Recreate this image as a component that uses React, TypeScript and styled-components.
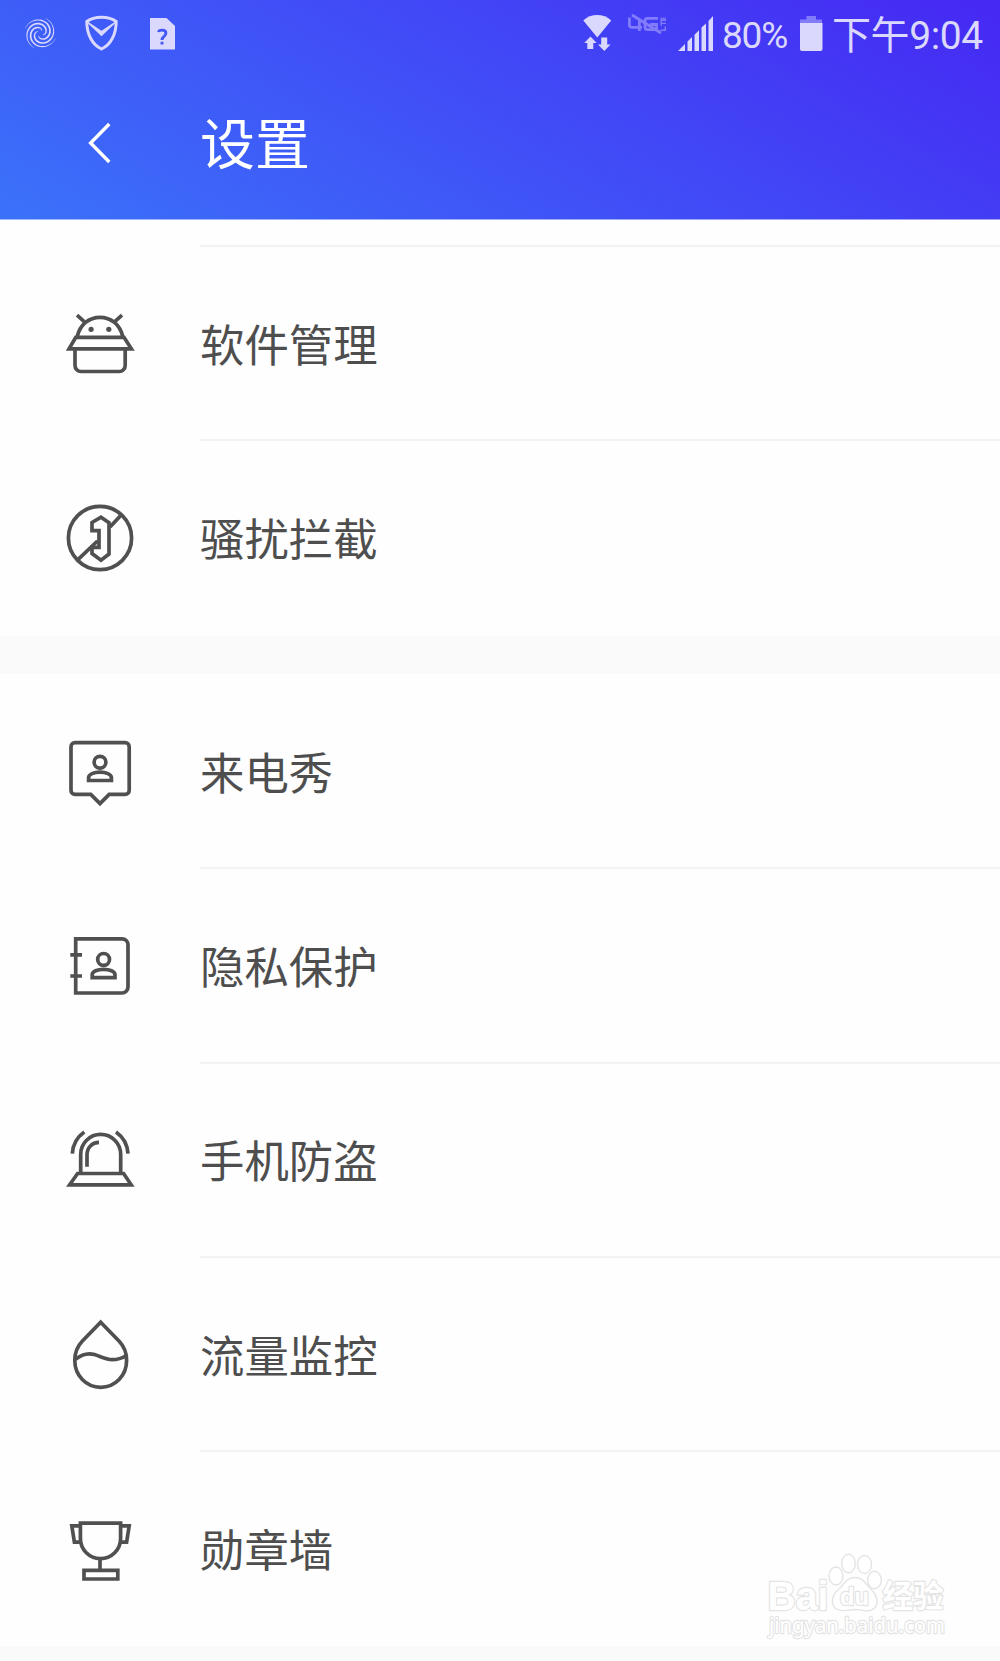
import React from "react";
import styled, { createGlobalStyle } from "styled-components";

const GlobalStyle = createGlobalStyle`
  * { box-sizing: border-box; }
  body { margin: 0; background: #ffffff; }
`;

const Screen = styled.div`
  position: relative;
  width: 1000px;
  height: 1661px;
  overflow: hidden;
  background: #fefefe;
  font-family: Roboto, "Noto Sans CJK SC", sans-serif;
`;

const Header = styled.header`
  height: 219px;
  background: linear-gradient(30deg, #3b72fa 0%, #4628f3 100%);
`;

const HeaderEdge = styled.div`
  height: 1px;
  background: linear-gradient(90deg, #9dbafd, #a29ffa);
`;

const StatusBar = styled.div`
  height: 68px;
  display: flex;
  align-items: flex-start;
  color: #dad8fd;
`;

const StatusIcon = styled.svg<{ $left: number; $top: number }>`
  display: block;
  flex: none;
  margin-left: ${(p) => p.$left}px;
  margin-top: ${(p) => p.$top}px;
`;

const StatusText = styled.span<{ $left: number; $top: number; $size: number; $width: number; $spacing: number }>`
  flex: none;
  width: ${(p) => p.$width}px;
  margin-left: ${(p) => p.$left}px;
  margin-top: ${(p) => p.$top}px;
  font-size: ${(p) => p.$size}px;
  letter-spacing: ${(p) => p.$spacing}px;
  line-height: 44px;
  white-space: nowrap;
`;

const Spacer = styled.span`
  flex: 1;
`;

const TitleBar = styled.div`
  height: 150px;
  display: flex;
  align-items: center;
`;

const BackButton = styled.button`
  width: 200px;
  height: 100%;
  padding: 0;
  border: 0;
  background: none;
  display: flex;
  align-items: center;
  justify-content: center;
`;

const Title = styled.h1`
  margin: 0;
  padding-bottom: 6px;
  color: #ffffff;
  font-family: "Noto Sans CJK SC", sans-serif;
  font-size: 55px;
  font-weight: 400;
  line-height: 80px;
`;

const Section = styled.section<{ $top?: number; $bottom?: number }>`
  padding-top: ${(p) => p.$top ?? 0}px;
  padding-bottom: ${(p) => p.$bottom ?? 0}px;
  background: #fefefe;
`;

const Band = styled.div<{ $height: number }>`
  height: ${(p) => p.$height}px;
  background: #fafafa;
`;

const Row = styled.div<{ $height: number }>`
  height: ${(p) => p.$height}px;
  display: flex;
`;

const IconCell = styled.div`
  width: 200px;
  padding: 2px 0 0 64px;
  display: flex;
  align-items: center;
`;

const RowIcon = styled.svg`
  display: block;
  fill: none;
  stroke: #505050;
  stroke-width: 3.7;
`;

const LabelCell = styled.div<{ $divider: boolean }>`
  flex: 1;
  display: flex;
  align-items: center;
  padding-bottom: 0.6px;
  border-top: 2px solid ${(p) => (p.$divider ? "#f3f3f3" : "transparent")};
`;

const Label = styled.span`
  color: #4e4e4e;
  font-family: "Noto Sans CJK SC", sans-serif;
  font-size: 44.4px;
  line-height: 64px;
`;

const Watermark = styled.svg`
  position: absolute;
  right: 0;
  bottom: 0;
  fill: #ffffff;
  stroke: #e4e4e4;
  stroke-width: 1.4;

  text {
    paint-order: stroke;
    stroke-width: 2.4;
    stroke-linejoin: round;
  }
`;

const Person = ({ x, y }: { x: number; y: number }) => (
  <g transform={`translate(${x} ${y})`}>
    <circle r="5.9" />
    <path d="M-11.4 18.2V15.4C-11.4 12 -6 9.9 0 9.9S11.4 12 11.4 15.4V18.2Z" />
  </g>
);

const icons = {
  software: (
    <>
      <path d="M13 8.2L20.5 14.8M58 8.2L50.5 14.8" />
      <path d="M13.3 29.5C16 17.5 25 10.3 36 10.3S56 17.5 58.7 29.5" />
      <path d="M11.8 30.3H60L67.4 41.8H5Z" />
      <path d="M11 42V58.5A6 6 0 0 0 17 64.5H55.2A6 6 0 0 0 61.2 58.5V42" />
      <circle cx="27.1" cy="22.3" r="2.6" fill="#505050" stroke="none" />
      <circle cx="44.8" cy="22.3" r="2.6" fill="#505050" stroke="none" />
    </>
  ),
  block: (
    <>
      <circle cx="36" cy="36" r="31.6" />
      <path d="M13.4 58.2L33.5 39M57.2 13L46 25" />
      <path d="M37 15.2L45 20.8V52L37 58.2L28 51.6V45.4H35V28.7H28V20.5Z" />
    </>
  ),
  caller: (
    <>
      <path d="M11 7.7H61.2A4 4 0 0 1 65.2 11.7V55.4A4 4 0 0 1 61.2 59.4H45.2L36 68.6L26.8 59.4H11A4 4 0 0 1 7 55.4V11.7A4 4 0 0 1 11 7.7Z" />
      <Person x={36} y={27.3} />
    </>
  ),
  privacy: (
    <g transform="translate(0 1)">
      <path d="M11.7 8.8H58A6 6 0 0 1 64 14.8V57A6 6 0 0 1 58 63H11.7ZM6.3 24.8H18M6.3 46H18" />
      <Person x={39.6} y={29.4} />
    </g>
  ),
  alarm: (
    <>
      <path d="M13.6 49.5H59.6L67.2 60.8H5.6Z" />
      <path d="M16.7 49V30.4A20 20 0 0 1 56.7 30.4V49" />
      <path d="M23 42.7V31C23 23.5 28 18.5 35 18.4" />
      <path d="M8.3 29.7C8.8 20.5 13 13 20.3 7.9M64 29.7C63.5 20.5 59.2 13 52 7.9" />
    </>
  ),
  drop: (
    <g transform="translate(0 1)">
      <path d="M36.7 3.2L55.2 22.3C60 27.3 62.6 34 62.6 41.5C62.6 56.5 51.3 68.3 36.7 68.3S10.8 56.5 10.8 41.5C10.8 34 13.4 27.3 18.2 22.3Z" />
      <path d="M11.3 40.4C17 35.8 23.5 33.5 30.5 35.6C37 37.6 42 40.6 48 40.7C54 40.7 58.5 39 62.4 36.5" />
    </g>
  ),
  trophy: (
    <g transform="translate(0 1)">
      <path d="M16.4 9.2H56.6V24.5A20.1 20.1 0 0 1 16.4 24.5Z" />
      <path d="M16.4 11.8H7.8L10.4 28.2H16.8M56.6 11.8H65.2L62.6 28.2H56.2M36 44.7V56.4" />
      <path d="M20 56.4H53.8V65H20Z" />
    </g>
  ),
};

type ItemData = { icon: keyof typeof icons; label: string };

const Item = ({ icon, label, divider }: ItemData & { divider: boolean }) => (
  <Row $height={divider ? 194.4 : 193.4}>
    <IconCell>
      <RowIcon width="72" height="72" viewBox="0 0 72 72">
        {icons[icon]}
      </RowIcon>
    </IconCell>
    <LabelCell $divider={divider}>
      <Label>{label}</Label>
    </LabelCell>
  </Row>
);

const firstGroup: ItemData[] = [
  { icon: "software", label: "软件管理" },
  { icon: "block", label: "骚扰拦截" },
];

const secondGroup: ItemData[] = [
  { icon: "caller", label: "来电秀" },
  { icon: "privacy", label: "隐私保护" },
  { icon: "alarm", label: "手机防盗" },
  { icon: "drop", label: "流量监控" },
  { icon: "trophy", label: "勋章墙" },
];

// One arm of the swirl: a spiral band that is widest in its middle and tapers at both ends.
const spiralArm = (start: number) => {
  const outer: string[] = [];
  const inner: string[] = [];
  for (let i = 0; i <= 40; i++) {
    const t = i / 40;
    const angle = start - t * 5;
    const radius = 3 + 13 * Math.pow(t, 0.85);
    const half = 0.1 + 0.8 * Math.sin(Math.PI * Math.min(1, t * 0.85 + 0.15));
    const at = (r: number) => `${(16.3 + r * Math.cos(angle)).toFixed(2)} ${(16.3 + r * Math.sin(angle)).toFixed(2)}`;
    outer.push(at(radius + half));
    inner.unshift(at(radius - half));
  }
  return `M${outer.concat(inner).join("L")}Z`;
};

export default function App() {
  return (
    <Screen>
      <GlobalStyle />
      <Header>
        <StatusBar>
          <StatusIcon $left={24} $top={17} width="33" height="33" viewBox="0 0 33 33" fill="currentColor">
            {[0.6, 2.17, 3.74, 5.31].map((start) => (
              <path key={start} d={spiralArm(start)} />
            ))}
          </StatusIcon>
          <StatusIcon $left={27} $top={14} width="36" height="38" viewBox="0 0 36 38" fill="none" stroke="currentColor" strokeWidth="3">
            <path d="M17.5 3.2C23 3.2 28.5 4.7 32.2 7.5C32.2 20 27 30.5 17.5 35C8 30.5 2.8 20 2.8 7.5C6.5 4.7 12 3.2 17.5 3.2Z" />
            <path d="M4 8.5L17.5 17.6L31 8.5L17.5 21.5Z" fill="currentColor" strokeWidth="1.2" />
          </StatusIcon>
          <StatusIcon $left={30} $top={18} width="25" height="32" viewBox="0 0 25 32">
            <path d="M0 0H16.5L25 8V31.5H0Z" fill="currentColor" />
            <path d="M8.5 14C9 11.7 15.9 11 15.9 15.2C15.9 18.5 12 18.2 12 22M12 23.7V26.5" fill="none" stroke="#4459f7" strokeWidth="2.9" />
          </StatusIcon>
          <Spacer />
          <StatusIcon $left={0} $top={15} width="29" height="37" viewBox="0 0 29 37" fill="currentColor">
            <path d="M0.3 5.5C8 -1.8 20.5 -1.8 28.2 5.5L14.3 22.5Z" />
            <path d="M7.5 21.5L13.7 28H10.3V34H4.3V28H1.2Z" />
            <path d="M21.3 36L27.5 29.5H24.2V22.5H18.2V29.5H15Z" />
          </StatusIcon>
          <StatusIcon $left={15} $top={13} width="40" height="23" viewBox="0 0 40 23" fill="none" stroke="#827cfb" strokeWidth="2.8">
            <path d="M2.4 4.5V12Q2.4 14.3 5 14.3H15M12.4 7V18M31 5.4H20.5Q18 5.4 18 8V14Q18 16.6 20.5 16.6H29.5V11.5H23" />
            <path d="M5 2L34 20" />
            <path d="M33.5 17.2H38.3V13.5M33.5 10.4H39M34.2 12.8V8M38.2 4.5V8M34.2 4.5V7.2M36.2 4.5V7.2M33.5 7.2H39" strokeWidth="1.4" />
          </StatusIcon>
          <StatusIcon $left={11} $top={16} width="36" height="35" viewBox="0 0 36 35" fill="currentColor">
            <path d="M0 35L7 28V35ZM9.5 25.5L14 21V35H9.5ZM16.5 18.7L21 14.2V35H16.5ZM23.5 11.5L28 7.5V35H23.5ZM30.5 5L35 0V35H30.5Z" />
          </StatusIcon>
          <StatusText $left={8} $top={13.5} $size={37} $width={67} $spacing={-1.2}>80%</StatusText>
          <StatusIcon $left={11} $top={16} width="23" height="35" viewBox="0 0 23 35">
            <path d="M6.5 0H16V3.5H22V8H0V3.5H6.5Z" fill="#827cfb" />
            <path d="M0 7H22.5V33Q22.5 35 20.5 35H2Q0 35 0 33Z" fill="currentColor" />
          </StatusIcon>
          <StatusText $left={9} $top={14} $size={39} $width={168} $spacing={-0.4}>下午9:04</StatusText>
        </StatusBar>
        <TitleBar>
          <BackButton aria-label="返回">
            <svg width="24" height="44" viewBox="0 0 24 44" fill="none" stroke="#ffffff" strokeWidth="3.4">
              <path d="M21.3 3L2.6 22L21.3 41" />
            </svg>
          </BackButton>
          <Title>设置</Title>
        </TitleBar>
      </Header>
      <HeaderEdge />
      <Section $top={25} $bottom={2}>
        {firstGroup.map((item) => (
          <Item key={item.label} {...item} divider />
        ))}
      </Section>
      <Band $height={38} />
      <Section $bottom={1.2}>
        {secondGroup.map((item, i) => (
          <Item key={item.label} {...item} divider={i > 0} />
        ))}
      </Section>
      <Band $height={20} />
      <Watermark width="250" height="121" viewBox="0 0 250 121">
        <text x="17.5" y="69.5" fontFamily="Liberation Sans, sans-serif" fontWeight="700" fontSize="41" textLength="61" lengthAdjust="spacingAndGlyphs">Bai</text>
        <ellipse cx="86" cy="36" rx="7" ry="9" />
        <ellipse cx="98.5" cy="23.5" rx="6.8" ry="9.3" />
        <ellipse cx="114.5" cy="24.5" rx="7" ry="9" />
        <ellipse cx="124.5" cy="40" rx="6.8" ry="8.7" />
        <path d="M105 37.5C114 37.5 116 45 121.5 50C127 55 129 62 125 67.5C120 73.5 112 69.5 105 69.5S92 73 85.5 68.5C80 63 82.5 54.5 88 50C94 45 96 37.5 105 37.5Z" />
        <text x="90" y="65" fontFamily="Liberation Sans, sans-serif" fontSize="24" fontWeight="700" textLength="29" lengthAdjust="spacingAndGlyphs">du</text>
        <text x="132.5" y="67" fontFamily="Noto Sans CJK SC, sans-serif" fontWeight="700" fontSize="30.5">经验</text>
        <text x="19" y="93" fontFamily="Noto Sans, sans-serif" fontSize="21.5" textLength="176" lengthAdjust="spacingAndGlyphs">jingyan.baidu.com</text>
      </Watermark>
    </Screen>
  );
}
